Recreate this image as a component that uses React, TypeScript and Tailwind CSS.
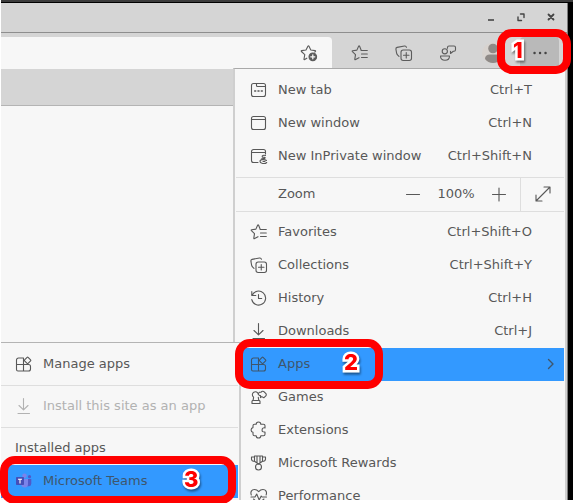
import React from "react";

type IconProps = { children: React.ReactNode; className?: string };

function Icon({ children, className = "" }: IconProps) {
  return (
    <svg
      viewBox="0 0 18 18"
      className={`h-[18px] w-[18px] shrink-0 ${className}`}
      fill="none"
      stroke="currentColor"
      strokeWidth="1.1"
      strokeLinecap="round"
      strokeLinejoin="round"
      aria-hidden="true"
    >
      {children}
    </svg>
  );
}

const NewTabIcon = () => (
  <Icon>
    <rect x="1.5" y="2.5" width="14" height="13" rx="2" />
    <path d="M6.5 2.5v2q0 1 1 1h8" />
    <path d="M4.7 10h1M8 10h1M11.3 10h1" strokeWidth="1.5" />
  </Icon>
);

const NewWindowIcon = () => (
  <Icon>
    <rect x="1.5" y="2.5" width="14" height="13" rx="2" />
    <path d="M1.5 5.5h14" />
  </Icon>
);

const InPrivateIcon = () => (
  <Icon>
    <path d="M8 15.5H3.5a2 2 0 0 1-2-2v-9a2 2 0 0 1 2-2h10a2 2 0 0 1 2 2V7M1.5 5.5h14" />
    <path d="M15.5 8.5c-2.2-.8-3.6.2-3.3 1.3s2.8-.2 3 .9-2.6.7-3.8 1.3" />
    <path d="M16.5 13.500c-2-1.300-6.500-1.200-6.500.8 0 2.400 5 2.900 6.700 1.200M13 14.500h2" />
  </Icon>
);

const FavoritesIcon = () => (
  <Icon>
    <path d="M10.300 6.500 8.600 2.300Q8.100 1.300 7.600 2.300L5.900 6.100 1.700 6.700Q.8 6.900 1.400 7.600L4.500 10.700 3.800 15.100Q3.700 16.100 4.600 15.600L8 13.700" />
    <path d="M10.300 6.500h6M10.500 10h5.800M10.500 13.500h5.800" />
  </Icon>
);

const CollectionsIcon = () => (
  <Icon>
    <rect x="6" y="6" width="10.500" height="10.500" rx="2.200" />
    <path d="M11.250 8.500v5.500M8.500 11.250H14" />
    <path d="M4 12.300 2.700 11.100Q1.800 10.300 1.600 9.200L.9 5.200Q.7 3.700 2.100 3.400L9.500 2Q11 1.700 11.500 3.300" />
  </Icon>
);

const HistoryIcon = () => (
  <Icon>
    <path d="M1.800 2.500v4h4M2.200 6.300a7 7 0 1 1-.4 4.300M8.500 5.500v4h3.200" />
  </Icon>
);

const DownloadIcon = () => (
  <Icon>
    <path d="M8.500 1.500v11M4 8.500l4.500 4.300L13 8.500M3 16.500h11.500" />
  </Icon>
);

const AppsIcon = () => (
  <Icon>
    <path d="M8.500 3H3.500a2 2 0 0 0-2 2v9.500a1.500 1.500 0 0 0 1.500 1.500h10.500a2 2 0 0 0 2-2v-2.500a2 2 0 0 0-2-2h-12M8.500 3v13" />
    <path d="M12.100 2.400q.5-.5 1 0l2.500 2.500q.5.500 0 1l-2.500 2.500q-.5.500-1 0L9.600 5.900q-.5-.5 0-1z" />
  </Icon>
);

const GamesIcon = () => (
  <Icon>
    <path d="M8.300 6.300A3 3 0 1 0 3.600 9.200L3.200 12 2 13.200v2.300h8v-2.300L8.700 12 8.300 9.400" />
    <path d="M3.500 12.500h5" />
    <path d="M9.500 4.200h1.600A1.900 1.900 0 0 1 14.300 4l1.200 1.200a1.800 1.800 0 0 1 0 3l-1.700 1.600-2-1.200-1.300 1.100V7.600a1.800 1.800 0 0 1-1-3.400z" />
  </Icon>
);

const ExtensionsIcon = () => (
  <Icon>
    <path d="M6.200 3.300A2.300 2.300 0 0 1 10.800 3.300H13.500q1.500 0 1.500 1.500v2.100q-2.700-.5-2.900 2t2.900 2.100v2.200q0 1.500-1.500 1.500h-2.700a2.300 2.300 0 0 1-4.600 0H4.500Q3 14.700 3 13.200V11.300a2.400 2.400 0 0 1 0-4.700V4.800q0-1.500 1.500-1.500z" />
  </Icon>
);

const RewardsIcon = () => (
  <Icon>
    <path d="M4.500 2h8v5.200L8.500 10 4.500 7.200zM4.500 3h-3v2.300q0 2 3.500 2.200M12.500 3h3v2.300q0 2-3.500 2.200M7 2v6.500M10 2v6.500" />
    <circle cx="8.500" cy="13" r="3" />
  </Icon>
);

const PerformanceIcon = () => (
  <Icon>
    <path d="M1.300 8C.2 5 1.500 2.500 4.500 2.500c2 0 3.200 1 4.200 2.200 1-1.200 2.200-2.200 4.200-2.200 3 0 4.300 2.500 3.200 5.500M3.500 12l5.200 4.500L14 12" />
    <path d="M1 10h4l1.700-3 2.500 6 2-4 .8 1H16.500" />
  </Icon>
);

const FeedbackIcon = () => (
  <Icon>
    <circle cx="5.800" cy="7.300" r="2.600" />
    <path d="M1.500 12h9q0 4.300-4.500 4.300T1.500 12z" />
    <path d="M8.500 4.300V3.500Q8.500 2 10 2h5q1.500 0 1.500 1.500v2.300q0 1.500-1.500 1.500h-.7L11.500 9.500V7.200" />
  </Icon>
);

const AddFavoriteIcon = () => (
  <Icon>
    <path d="M6.800 14.200 4.700 15.500Q3.800 16 4 15l.8-4.400L1.400 7.500Q.8 6.800 1.700 6.600L6 6 7.900 2.200Q8.500 1.200 9 2.200L10.800 6l4.200.6q1 .2.400.9l-.6.700" />
    <circle cx="12.800" cy="12.800" r="3.800" fill="currentColor" />
    <path d="M12.800 10.800v4M10.800 12.800h4" stroke="#f7f7f7" strokeWidth="1.300" />
  </Icon>
);

const TeamsIcon = () => (
  <svg viewBox="0 0 18 18" className="h-[18px] w-[18px] shrink-0" aria-hidden="true">
    <circle cx="9.500" cy="3.800" r="2.300" fill="#7b83eb" />
    <circle cx="14.500" cy="4.700" r="1.600" fill="#5059c9" />
    <path d="M12 7h4.300v4.500q0 2.500-2.300 2.700h-2z" fill="#5059c9" />
    <path d="M6 7h7v5q0 3.500-3.300 3.500T6 12z" fill="#7b83eb" />
    <rect x="1" y="5" width="8" height="8" rx=".8" fill="#464eb8" />
    <path d="M3 7.200h4M5 7.200v4.300" stroke="#fff" strokeWidth="1.100" fill="none" />
  </svg>
);

type MenuEntry = { label: string; icon: React.ReactNode; keys?: string; active?: boolean };

const topItems: MenuEntry[] = [
  { label: "New tab", icon: <NewTabIcon />, keys: "Ctrl+T" },
  { label: "New window", icon: <NewWindowIcon />, keys: "Ctrl+N" },
  { label: "New InPrivate window", icon: <InPrivateIcon />, keys: "Ctrl+Shift+N" },
];

const mainItems: MenuEntry[] = [
  { label: "Favorites", icon: <FavoritesIcon />, keys: "Ctrl+Shift+O" },
  { label: "Collections", icon: <CollectionsIcon />, keys: "Ctrl+Shift+Y" },
  { label: "History", icon: <HistoryIcon />, keys: "Ctrl+H" },
  { label: "Downloads", icon: <DownloadIcon />, keys: "Ctrl+J" },
  { label: "Apps", icon: <AppsIcon />, active: true },
  { label: "Games", icon: <GamesIcon /> },
  { label: "Extensions", icon: <ExtensionsIcon /> },
  { label: "Microsoft Rewards", icon: <RewardsIcon /> },
  { label: "Performance", icon: <PerformanceIcon /> },
];

function MenuItem({ item }: { item: MenuEntry }) {
  return (
    <button
      type="button"
      className={`flex h-[33px] w-full items-center gap-[10px] pb-0.5 pl-[14px] text-left ${
        item.active ? "bg-[#3399ff] pr-2 text-[#3f566c]" : "pr-8"
      }`}
    >
      {item.icon}
      <span className="flex-1 whitespace-nowrap">{item.label}</span>
      {item.keys && <span className="whitespace-nowrap">{item.keys}</span>}
      {item.active && (
        <Icon className="-mr-1">
          <path d="M6.500 4.500 11 9 6.500 13.500" strokeWidth="1.400" />
        </Icon>
      )}
    </button>
  );
}

function Callout({ box, number, digit }: { box: string; number: string; digit: string }) {
  return (
    <div className={`pointer-events-none absolute z-30 rounded-[15px] border-8 border-[#ff0000] ${box}`}>
      <span
        className={`absolute font-[Inter,sans-serif] text-[22px] leading-6 font-extrabold text-[#ff0000] [-webkit-text-stroke:5px_white] [paint-order:stroke_fill] drop-shadow-[1px_2px_1px_rgba(0,0,0,0.45)] ${number}`}
      >
        {digit}
      </span>
    </div>
  );
}

export default function App() {
  return (
    <div className="relative h-screen overflow-hidden bg-white pb-[3px] pl-px font-['DejaVu_Sans',sans-serif] text-[13px] leading-4 text-[#585858]">
      <div className="h-full overflow-hidden bg-black pr-[5px]">
        <div className="relative flex h-full flex-col border-r border-[#7c7c7c] bg-[#f7f7f7]">
          <div className="-mr-1.5 h-[3px] shrink-0 border-b border-black bg-[#3c3c3c]" />

          <header className="flex h-[30px] shrink-0 items-center justify-end gap-3 border-b border-[#8e8e8e] bg-[#d5d5d5] pr-[7px] pb-0.5 text-[#444]">
            <button type="button" aria-label="Minimize">
              <Icon>
                <path d="M6 12h6" strokeWidth="1.600" strokeLinecap="butt" />
              </Icon>
            </button>
            <button type="button" aria-label="Restore">
              <Icon>
                <path d="M8.500 6H12v3.500M9.500 12.500H6V9" strokeWidth="1.400" />
              </Icon>
            </button>
            <button type="button" aria-label="Close">
              <Icon>
                <path d="m6.500 6.500 5 5m0-5-5 5" strokeWidth="1.800" />
              </Icon>
            </button>
          </header>

          <div className="flex h-9 shrink-0 items-stretch bg-[#d5d5d5] pt-1 pr-2 text-[#5c5c5c]">
            <div className="flex flex-1 items-center rounded-tr bg-[#f7f7f7] pr-[14px]">
              <input type="text" aria-label="Address" className="h-full w-0 flex-1 bg-transparent px-3 outline-none" />
              <button type="button" aria-label="Add to favorites">
                <AddFavoriteIcon />
              </button>
            </div>
            <div className="mr-1.5 ml-1.5 flex">
              <button type="button" aria-label="Favorites" className="flex w-11 items-center justify-center">
                <FavoritesIcon />
              </button>
              <button type="button" aria-label="Collections" className="flex w-11 items-center justify-center">
                <CollectionsIcon />
              </button>
              <button type="button" aria-label="Feedback" className="flex w-11 items-center justify-center">
                <FeedbackIcon />
              </button>
              <button type="button" aria-label="Profile" className="flex w-11 items-center justify-center">
                <svg viewBox="0 0 20 20" className="h-5 w-5" aria-hidden="true">
                  <circle cx="10" cy="10" r="10" fill="#d8d3cf" />
                  <circle cx="11" cy="5.500" r="4.800" fill="#8f8a87" />
                  <path d="M3 16q0-4.500 5-4.500h6q5 0 5 4.500-3 4-8 4t-8-4z" fill="#8f8a87" />
                </svg>
              </button>
            </div>
            <button
              type="button"
              aria-label="Settings and more"
              className="flex w-[39px] items-center justify-center rounded-sm bg-[#b9b9b9] text-[#444]"
            >
              <Icon>
                <path d="M3.500 9h.1M9 9h.1M14.500 9h.1" strokeWidth="2.400" />
              </Icon>
            </button>
          </div>

          <div className="h-[37px] shrink-0 border-b border-[#b4b4b4] bg-[#d5d5d5]" />

          <nav
            aria-label="Settings and more"
            className="absolute top-[68px] right-0 bottom-0 z-10 w-[334px] overflow-hidden border-x-2 border-t border-x-[#cfcfcf] border-t-[#a9a9a9] bg-[#f7f7f7] px-px pt-[5px]"
          >
            {topItems.map((item) => (
              <MenuItem key={item.label} item={item} />
            ))}
            <div className="mt-1 mb-1 flex h-[35px] items-center border-y border-[#dedede] pl-[42px]">
              <span className="flex-1 pb-0.5">Zoom</span>
              <button type="button" aria-label="Zoom out" className="pb-0.5">
                <Icon>
                  <path d="M2.500 9.500h13" />
                </Icon>
              </button>
              <span className="w-[68px] pb-0.5 text-center">100%</span>
              <button type="button" aria-label="Zoom in" className="pb-0.5">
                <Icon>
                  <path d="M2.500 9.500h13M9 3v13" />
                </Icon>
              </button>
              <button
                type="button"
                aria-label="Full screen"
                className="ml-3 flex h-full w-11 items-center justify-center border-l border-[#dedede] pb-0.5"
              >
                <Icon>
                  <path d="M2.500 15.500l13-13M10 2h6v6M2 10v6h6" />
                </Icon>
              </button>
            </div>
            {mainItems.map((item) => (
              <MenuItem key={item.label} item={item} />
            ))}
          </nav>
        </div>
      </div>

      <nav
        aria-label="Apps"
        className="absolute top-[342px] bottom-[3px] left-px z-20 w-[240px] overflow-hidden border-t border-r-2 border-t-[#b4b4b4] border-r-[#cfcfcf] bg-[#f7f7f7] pt-[5px] pr-px"
      >
        <button type="button" className="flex h-[33px] w-full items-center gap-[10px] pb-0.5 pl-[14px]">
          <AppsIcon />
          <span>Manage apps</span>
        </button>
        <div className="my-1 border-t border-[#dedede]" />
        <button
          type="button"
          disabled
          className="flex h-[33px] w-full items-center gap-[10px] pb-0.5 pl-[14px] text-[#b2b2b2]"
        >
          <DownloadIcon />
          <span className="whitespace-nowrap">Install this site as an app</span>
        </button>
        <div className="my-1 border-t border-[#dedede]" />
        <h2 className="flex h-[33px] items-center pb-0.5 pl-[14px]">Installed apps</h2>
        <button
          type="button"
          className="flex h-[33px] w-full items-center gap-[10px] bg-[#3399ff] pb-0.5 pl-[14px] text-[#3f566c]"
        >
          <TeamsIcon />
          <span>Microsoft Teams</span>
        </button>
      </nav>

      <Callout box="top-[29px] right-[2px] h-[45px] w-[74px]" number="top-[1px] left-2" digit="1" />
      <Callout box="top-[339px] right-[190px] h-[50px] w-[148px]" number="top-[3px] left-[101px]" digit="2" />
      <Callout box="top-[456px] left-0 h-[48px] w-[236px]" number="top-[3px] left-[176px]" digit="3" />
    </div>
  );
}
